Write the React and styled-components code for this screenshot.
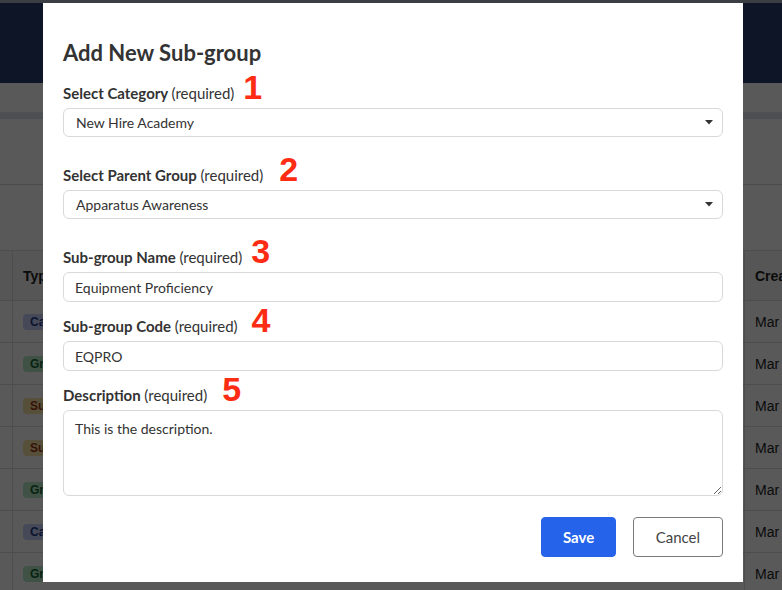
import React from "react";
import styled, { createGlobalStyle } from "styled-components";

const GlobalStyle = createGlobalStyle`
  html, body { margin: 0; padding: 0; width: 782px; height: 590px; overflow: hidden; background: #fff; }
  body { font-family: "Liberation Sans", Arial, sans-serif; }
  * { box-sizing: border-box; }
`;

const Page = styled.div`
  position: relative;
  width: 782px;
  height: 590px;
  overflow: hidden;
  background: #fff;
`;

const TopStrip = styled.div`
  height: 3px;
  background: #aab2be;
`;

const Header = styled.header`
  height: 80px;
  background: #253c6d;
`;

const Toolbar = styled.div`
  height: 36px;
  background: #fff;
  border-bottom: 7px solid #dce4ec;
`;

const Filters = styled.div`
  height: 66px;
  border-bottom: 1px solid #d6d6d6;
`;

const Spacer = styled.div`
  height: 65px;
`;

const Table = styled.div`
  border-top: 1px solid #dcdcdc;
  width: 900px;
`;

const Row = styled.div`
  display: grid;
  grid-template-columns: 12px 732px 156px;
  height: ${(p) => (p.$head ? "50px" : "42px")};
  border-bottom: 1px solid #dcdcdc;
  background: ${(p) => (p.$head ? "#f6f6f6" : "#fff")};
`;

const Cell = styled.div`
  display: flex;
  align-items: center;
  padding: 0 11px 0 10px;
  border-left: ${(p) => (p.$first ? "none" : "1px solid #dcdcdc")};
  font-size: 14px;
  font-weight: ${(p) => (p.$head ? 700 : 400)};
  color: #222;
  white-space: nowrap;
`;

const badgeColors = {
  Category: { bg: "#c9d3fb", fg: "#1e3a8a" },
  Group: { bg: "#b6ecc7", fg: "#166534" },
  "Sub-group": { bg: "#f6e3a6", fg: "#9a3412" },
};

const Badge = styled.span`
  display: inline-flex;
  align-items: center;
  height: 16px;
  padding: 0 7px;
  border-radius: 4px;
  font-size: 12px;
  font-weight: 700;
  background: ${(p) => badgeColors[p.$kind].bg};
  color: ${(p) => badgeColors[p.$kind].fg};
`;

const Overlay = styled.div`
  position: absolute;
  inset: 0;
  background: rgba(0, 0, 0, 0.65);
`;

const Modal = styled.div`
  position: absolute;
  top: 3px;
  left: 43px;
  width: 700px;
  background: #fff;
  padding: 38px 20px 25px;
  font-family: Lato, "Noto Sans", sans-serif;
  color: #333;
`;

const Title = styled.h2`
  margin: 0 0 18px;
  font-size: 22px;
  line-height: 24px;
  font-weight: 700;
  color: #333;
`;

const Field = styled.div`
  margin-bottom: ${(p) => p.$gap}px;
`;

const Label = styled.label`
  display: block;
  margin-bottom: 5px;
  font-size: 15px;
  line-height: 20px;
  font-weight: 700;
  color: #333;
`;

const Req = styled.span`
  font-weight: 400;
`;

const Marker = styled.span`
  display: inline-block;
  margin-left: ${(p) => p.$ml}px;
  font-family: "Liberation Sans", Arial, sans-serif;
  font-size: 34px;
  line-height: 0;
  font-weight: 700;
  color: #fd2c12;
  vertical-align: baseline;
`;

const SelectBox = styled.div`
  display: flex;
  align-items: center;
  justify-content: space-between;
  height: 29px;
  padding: 0 9px 0 12px;
  border: 1px solid #d9d9d9;
  border-radius: 6px;
  font-size: 14px;
  color: #333;
`;

const Caret = styled.svg`
  width: 8px;
  height: 5px;
  display: block;
`;

const TextInput = styled.input`
  display: block;
  width: 100%;
  height: 30px;
  padding: 0 11px;
  border: 1px solid #d9d9d9;
  border-radius: 6px;
  font-family: Lato, "Noto Sans", sans-serif;
  font-size: 14px;
  color: #333;
  background: #fff;
  outline: none;
`;

const TextArea = styled.textarea`
  display: block;
  width: 100%;
  height: 86px;
  padding: 8px 11px;
  border: 1px solid #d9d9d9;
  border-radius: 6px;
  font-family: Lato, "Noto Sans", sans-serif;
  font-size: 14px;
  line-height: 1.4;
  color: #333;
  background: #fff;
  outline: none;
`;

const Actions = styled.div`
  display: flex;
  justify-content: flex-end;
  gap: 17px;
`;

const Button = styled.button`
  height: 40px;
  padding: 0 ${(p) => (p.$primary ? "20.5px" : "22px")};
  border-radius: 4px;
  font-family: Lato, "Noto Sans", sans-serif;
  font-size: 15px;
  font-weight: ${(p) => (p.$primary ? 700 : 400)};
  color: ${(p) => (p.$primary ? "#fff" : "#444")};
  background: ${(p) => (p.$primary ? "#2563eb" : "#fff")};
  border: 1px solid ${(p) => (p.$primary ? "#2563eb" : "#7a7a7a")};
  cursor: pointer;
`;

const rows = ["Category", "Group", "Sub-group", "Sub-group", "Group", "Category", "Group"];

function CaretIcon() {
  return (
    <Caret viewBox="0 0 8 5">
      <path d="M0 0 L8 0 L4 4.5 Z" fill="#333" />
    </Caret>
  );
}

export default function App() {
  return (
    <>
      <GlobalStyle />
      <Page>
        <TopStrip />
        <Header />
        <Toolbar />
        <Filters />
        <Spacer />
        <Table>
          <Row $head>
            <Cell $first />
            <Cell $head>Type</Cell>
            <Cell $head>Created</Cell>
          </Row>
          {rows.map((r, i) => (
            <Row key={i}>
              <Cell $first />
              <Cell>
                <Badge $kind={r}>{r}</Badge>
              </Cell>
              <Cell>Mar 12, 2024</Cell>
            </Row>
          ))}
        </Table>
        <Overlay />
        <Modal>
          <Title>Add New Sub-group</Title>
          <Field $gap={28}>
            <Label>
              Select Category <Req>(required)</Req>
              <Marker $ml={9}>1</Marker>
            </Label>
            <SelectBox>
              <span>New Hire Academy</span>
              <CaretIcon />
            </SelectBox>
          </Field>
          <Field $gap={28}>
            <Label>
              Select Parent Group <Req>(required)</Req>
              <Marker $ml={16}>2</Marker>
            </Label>
            <SelectBox>
              <span>Apparatus Awareness</span>
              <CaretIcon />
            </SelectBox>
          </Field>
          <Field $gap={14}>
            <Label>
              Sub-group Name <Req>(required)</Req>
              <Marker $ml={9}>3</Marker>
            </Label>
            <TextInput defaultValue="Equipment Proficiency" />
          </Field>
          <Field $gap={14}>
            <Label>
              Sub-group Code <Req>(required)</Req>
              <Marker $ml={14}>4</Marker>
            </Label>
            <TextInput defaultValue="EQPRO" />
          </Field>
          <Field $gap={21}>
            <Label>
              Description <Req>(required)</Req>
              <Marker $ml={15}>5</Marker>
            </Label>
            <TextArea defaultValue="This is the description." />
          </Field>
          <Actions>
            <Button $primary>Save</Button>
            <Button>Cancel</Button>
          </Actions>
        </Modal>
      </Page>
    </>
  );
}
